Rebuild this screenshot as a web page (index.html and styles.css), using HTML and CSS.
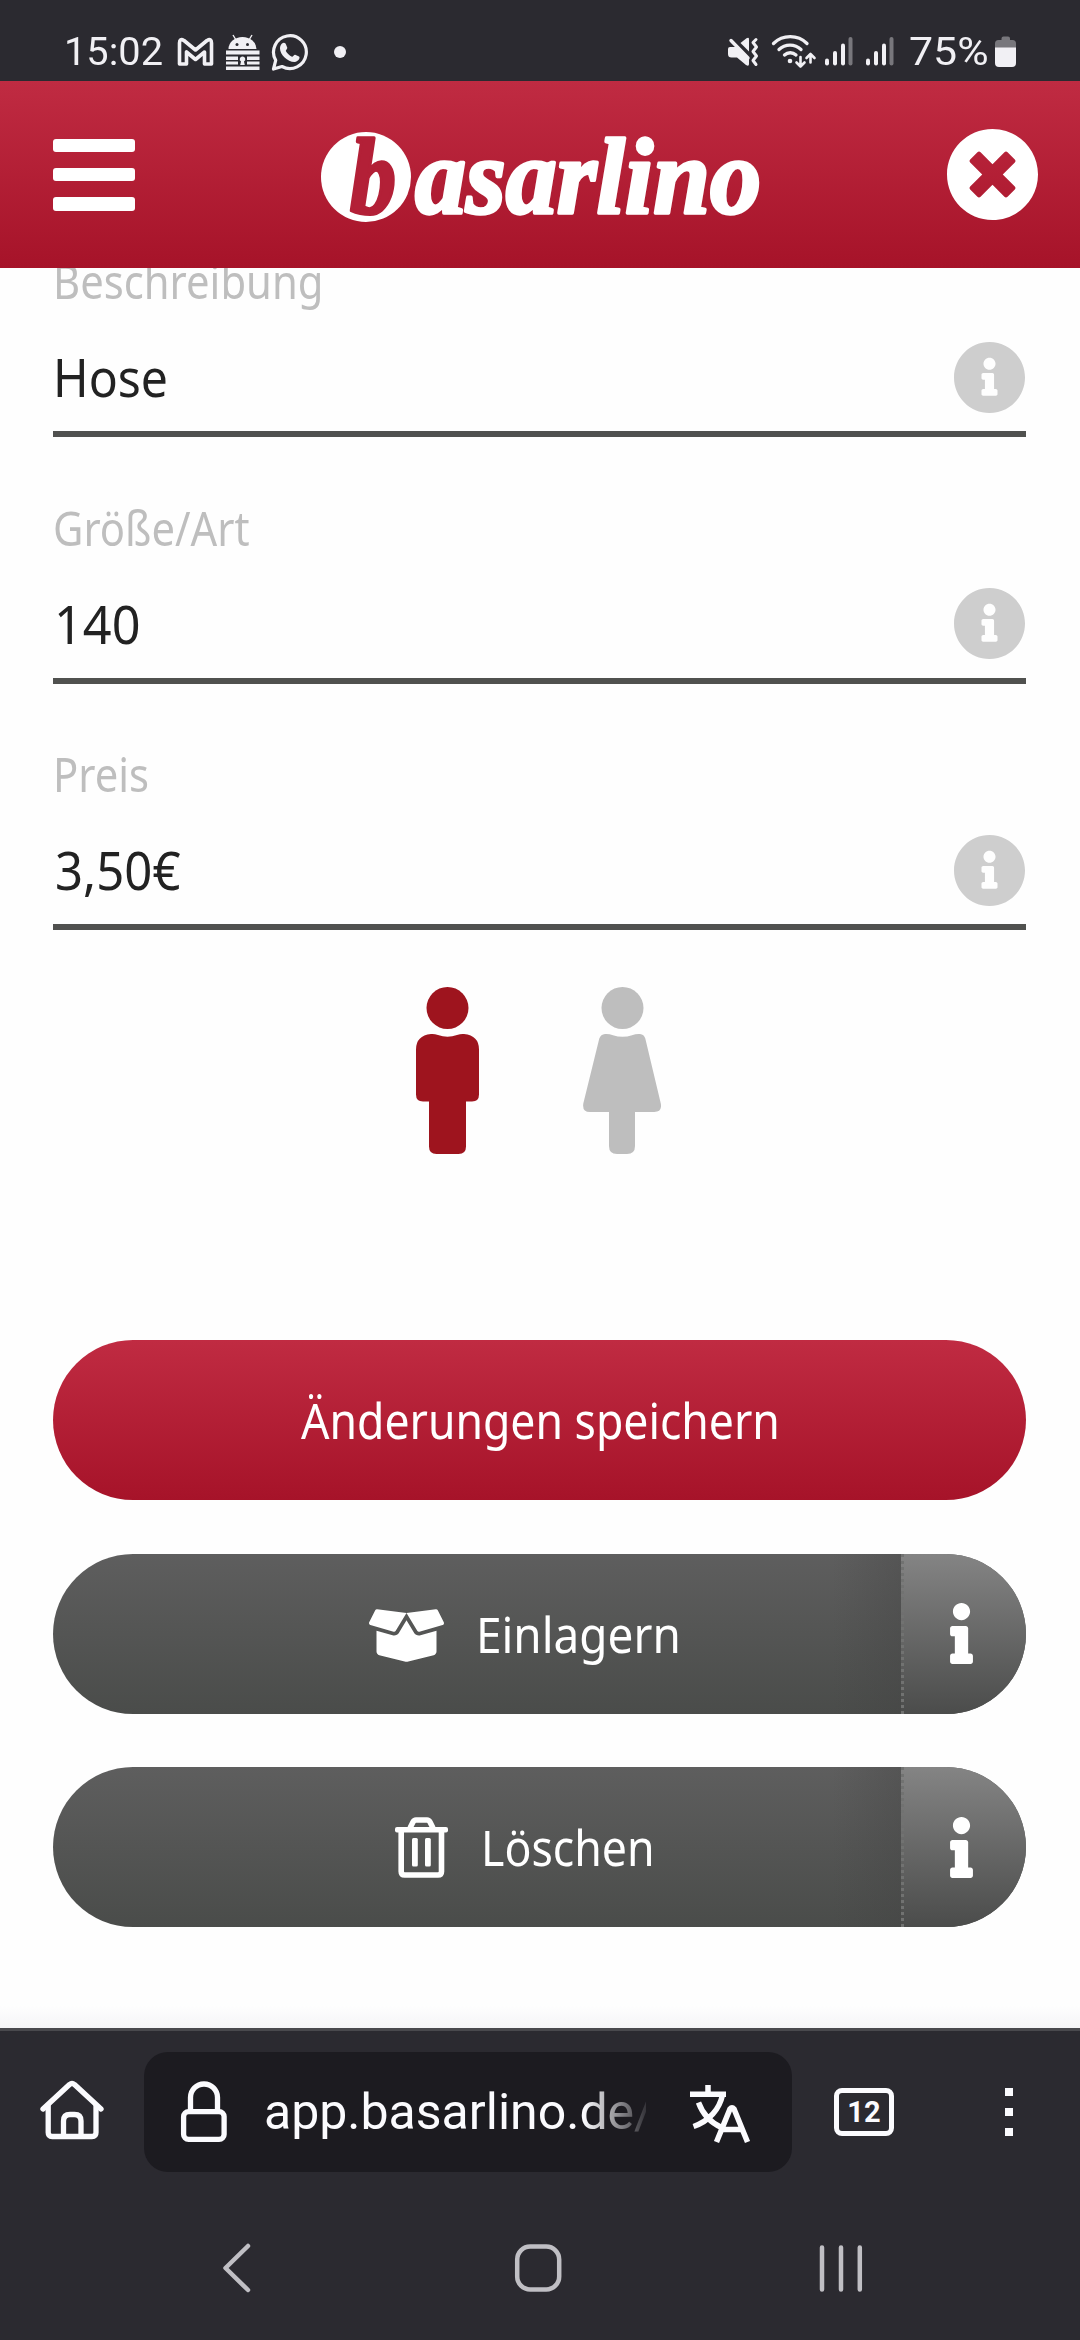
FILE: index.html
```html
<!DOCTYPE html>
<html lang="de">
<head>
<meta charset="utf-8">
<title>basarlino</title>
<link rel="stylesheet" href="styles.css">
</head>
<body>
<svg class="defs" aria-hidden="true">
  <symbol id="info" viewBox="0 0 192 512"><path d="M20 424.229h20V279.771H20c-11.046 0-20-8.954-20-20V212c0-11.046 8.954-20 20-20h112c11.046 0 20 8.954 20 20v212.229h20c11.046 0 20 8.954 20 20V492c0 11.046-8.954 20-20 20H20c-11.046 0-20-8.954-20-20v-47.771c0-11.046 8.954-20 20-20zM96 0C56.235 0 24 32.235 24 72s32.235 72 72 72 72-32.235 72-72S135.764 0 96 0z"/></symbol>
  <symbol id="info-circle" viewBox="8 8 496 496"><path d="M256 8C119.043 8 8 119.083 8 256c0 136.997 111.043 248 248 248s248-111.003 248-248C504 119.083 392.957 8 256 8zm0 110c23.196 0 42 18.804 42 42s-18.804 42-42 42-42-18.804-42-42 18.804-42 42-42zm56 254c0 6.627-5.373 12-12 12h-88c-6.627 0-12-5.373-12-12v-24c0-6.627 5.373-12 12-12h12v-64h-12c-6.627 0-12-5.373-12-12v-24c0-6.627 5.373-12 12-12h64c6.627 0 12 5.373 12 12v100h12c6.627 0 12 5.373 12 12v24z"/></symbol>
  <symbol id="signal" viewBox="0 0 34 40"><g stroke="#f1f0f4" stroke-width="4" stroke-linecap="round"><path d="M4 28.500V31.500"/><path d="M12 21V31.500"/><path d="M20 13.500V31.500"/><path d="M27.500 7V31.500" stroke="#78777c"/></g></symbol>
</svg>

<div class="status">
  <span class="clock">15:02</span>
  <svg width="50" height="40" viewBox="170 32 50 40"><path d="M179.500 64V43q0-5 4.500-2.500L195.500 50 207 40.500q4.500-2.500 4.500 2.500V64H204.500V52L195.500 59.500 186.500 52V64Z" fill="none" stroke="#f1f0f4" stroke-width="3.600" stroke-linejoin="round"/></svg>
  <svg width="45" height="40" viewBox="220 32 45 40"><g fill="#f1f0f4"><path d="M228.500 49a14 12 0 0 1 28 0z"/><rect x="226" y="50.500" width="33.500" height="4"/><rect x="226" y="56.500" width="33.500" height="3.500"/><rect x="226" y="61.500" width="33.500" height="3"/><rect x="226" y="66.500" width="33.500" height="3.500"/></g><path d="M233 35l3 5M252 35l-3 5" stroke="#f1f0f4" stroke-width="1.400"/><g fill="#2b2a30"><circle cx="237" cy="44.500" r="1.500"/><circle cx="247.500" cy="44.500" r="1.500"/><path d="M238 56h9v9.500h-9z"/></g><path fill="#f1f0f4" d="M242.500 56.500a2.700 2.700 0 0 1 1.500 5l.8 3.500h-4.600l.8-3.500a2.700 2.700 0 0 1 1.500-5z"/></svg>
  <svg width="47" height="40" viewBox="265 32 47 40"><path d="M273.500 69l2.200-8.700a16.400 16.400 0 1 1 6.300 6.200z" fill="none" stroke="#f1f0f4" stroke-width="3.200" stroke-linejoin="round"/><path fill="#f1f0f4" d="M282 43.500c2-1.500 3.500-.5 4 1l1.300 3.300c.3 1-1.800 2.700-1.500 3.200 1.400 2.600 3.600 4.500 6.200 5.700.8.300 2.200-2.400 3.200-2l3.800 1.900c1.500.8-.3 5.200-4.500 5.400-7 0-14.500-7.500-14.500-13.500 0-2 .7-4 2-5z"/></svg>
  <svg width="38" height="40" viewBox="312 32 38 40"><circle cx="340" cy="52" r="6" fill="#f1f0f4"/></svg>
  <span class="spacer"></span>
  <svg width="42" height="40" viewBox="725 32 42 40"><g fill="#f1f0f4"><path d="M730 47h7l12 12v5q0 3-3 1L737 57.500h-5.500q-3.500 0-3.500-3.500v-5q0-2 2-2z"/><path d="M740.500 43l6-4.700q2.500-1.300 2.500 1V51.500z"/></g><path d="M731 40.500L748 58" stroke="#f1f0f4" stroke-width="3.400" stroke-linecap="round"/><path d="M756 39.500l-3 3 3.500 4.500-3.500 4.500 3.500 4.500-3.500 4.500 3 4" fill="none" stroke="#f1f0f4" stroke-width="3" stroke-linecap="round" stroke-linejoin="round"/></svg>
  <svg width="54" height="40" viewBox="767 32 54 40"><g fill="none" stroke="#f1f0f4" stroke-width="3.300" stroke-linecap="round"><path d="M773.500 43.500a24 24 0 0 1 33.500 0"/><path d="M779 49.500a16 16 0 0 1 22 0"/><path d="M784.500 55a8.500 8.500 0 0 1 11.500 0"/><path d="M800.500 57v9.500m-4-4l4 4 4-4M810.500 62.500V54m-4 4l4-4 4 4" stroke-width="2.600" stroke-linejoin="round"/></g><circle cx="790" cy="61" r="2.300" fill="#f1f0f4"/></svg>
  <svg class="sig" width="34" height="40"><use href="#signal"/></svg>
  <svg class="sig second" width="34" height="40"><use href="#signal"/></svg>
  <span class="percent">75%</span>
  <svg width="24" height="40" viewBox="993 32 24 40"><path d="M995 48v-4.500q0-3.500 3.500-3.500h3v-1.500q0-2 2-2h4.500q2 0 2 2V40h2.500q3.500 0 3.500 3.500V48z" fill="#78777c"/><path d="M995 47.500h21V63q0 4-4 4h-13q-4 0-4-4z" fill="#f1f0f4"/></svg>
</div>

<header class="header">
  <div class="menu"><i></i><i></i><i></i></div>
  <svg class="logo" width="446" height="130" viewBox="320 112 446 130">
    <circle cx="366" cy="177" r="45" fill="#fff"/>
    <text class="logo-b" x="350" y="212.500" textLength="46" lengthAdjust="spacingAndGlyphs">b</text>
    <text class="logo-text" x="415" y="212.500" textLength="346" lengthAdjust="spacingAndGlyphs">asarlino</text>
  </svg>
  <svg class="close" width="91" height="91" viewBox="8 8 496 496"><path fill="#fff" d="M256 8C119 8 8 119 8 256s111 248 248 248 248-111 248-248S393 8 256 8zm121.600 313.100c4.700 4.700 4.700 12.300 0 17L338 377.600c-4.700 4.700-12.300 4.700-17 0L256 312l-65.100 65.600c-4.700 4.700-12.300 4.700-17 0L134.400 338c-4.700-4.700-4.700-12.300 0-17l65.600-65-65.600-65.100c-4.700-4.700-4.700-12.300 0-17l39.600-39.600c4.700-4.700 12.300-4.700 17 0l65 65.700 65.100-65.600c4.700-4.700 12.300-4.700 17 0l39.600 39.600c4.700 4.700 4.700 12.300 0 17L312 256l65.600 65.100z"/></svg>
</header>

<main class="page">
  <div class="field">
    <label>Beschreibung</label>
    <div class="entry"><span class="value">Hose</span><svg width="71" height="71"><use href="#info-circle"/></svg></div>
  </div>
  <div class="field">
    <label>Größe/Art</label>
    <div class="entry"><span class="value number">140</span><svg width="71" height="71"><use href="#info-circle"/></svg></div>
  </div>
  <div class="field">
    <label>Preis</label>
    <div class="entry"><span class="value price">3,50€</span><svg width="71" height="71"><use href="#info-circle"/></svg></div>
  </div>

  <div class="kids">
    <svg width="63" height="167" viewBox="416 987 63 167" fill="#9e141e"><circle cx="447.500" cy="1008" r="21"/><path d="M431 1034q3-.4 7 1 9.500 3.300 19 0 4-1.400 7-1 15 1.500 15 15.500v45q0 7-7 7h-6v45q0 7.500-7.500 7.500h-22q-7.500 0-7.500-7.500v-45h-6q-7 0-7-7v-45q0-14 15-15.500z"/></svg>
    <svg width="78" height="167" viewBox="583 987 78 167" fill="#bebebe"><circle cx="622.500" cy="1008" r="21"/><path d="M605 1034q4-.3 8 1.200 9.500 3 19 0 4-1.500 8-1.200 4 .3 5.300 4.500l15.500 65q1.500 8.500-6.500 8.500H635v34q0 8-8 8h-10q-8 0-8-8v-34H590q-8 0-6.700-8.500l16-65q1.500-4.200 5.700-4.500z"/></svg>
  </div>

  <div class="actions">
    <button class="btn primary"><span class="save">Änderungen speichern</span></button>
    <button class="btn">
      <span class="main">
        <svg class="box" width="75" height="53" viewBox="0 30 640 452" fill="#fff"><path d="M425.700 256c-16.900 0-32.800-9-41.400-23.400L320 126l-64.200 106.600c-8.700 14.500-24.600 23.500-41.500 23.500-4.500 0-9-.6-13.300-1.900L64 215v178c0 14.700 10 27.500 24.200 31l216.200 54.100c10.200 2.500 20.900 2.500 31 0L551.800 424c14.200-3.600 24.200-16.400 24.200-31V215l-137 39.100c-4.300 1.300-8.800 1.900-13.300 1.900zm212.600-112.200L586.800 41c-3.100-6.200-9.800-9.800-16.700-8.900L320 64l91.700 152.100c3.800 6.300 11.400 9.300 18.500 7.300l197.900-56.500c9.900-2.900 14.700-13.900 10.200-23.100zM53.200 41L1.700 143.800c-4.600 9.200.3 20.200 10.100 23l197.900 56.500c7.100 2 14.700-1 18.500-7.300L320 64 69.800 32.100c-6.900-.8-13.500 2.700-16.600 8.900z"/></svg>
        <span class="store">Einlagern</span>
      </span>
      <span class="help"><svg width="23" height="61"><use href="#info"/></svg></span>
    </button>
    <button class="btn">
      <span class="main">
        <svg width="53" height="61" viewBox="0 0 53 61"><g fill="none" stroke="#fff" stroke-width="5.500" stroke-linejoin="round"><path d="M6.200 14V54.500q0 3.500 3.500 3.500H43q3.500 0 3.500-3.500V14" stroke-width="5.600"/><path d="M15 11l3-6q1-2 3-2h11q2 0 3 2l3 6"/></g><g fill="#fff"><rect x="0" y="10" width="53" height="5.500" rx="2"/><rect x="17" y="21" width="5.800" height="28.500" rx="1.500"/><rect x="30" y="21" width="5.800" height="28.500" rx="1.500"/></g></svg>
        <span class="delete">Löschen</span>
      </span>
      <span class="help"><svg width="23" height="61"><use href="#info"/></svg></span>
    </button>
  </div>
</main>

<div class="toolbar">
  <svg width="66" height="64" viewBox="39 2080 66 64" fill="none" stroke="#fbfbfe" stroke-width="5.300" stroke-linecap="round" stroke-linejoin="round"><path d="M43 2109L69.500 2084.500q2.500-2 5 0L101 2109"/><path d="M48.200 2106v26.500q0 4 4 4H92q4 0 4-4V2106"/><path d="M63.500 2135v-14q0-6.500 6.500-6.500h4.500q6.500 0 6.500 6.500v14"/></svg>
  <div class="address">
    <svg width="50" height="64" viewBox="179 2080 50 64" fill="none" stroke="#fbfbfe" stroke-width="5.300"><rect x="183.600" y="2111.600" width="40.500" height="27.800" rx="5"/><path d="M190.500 2111v-13.500a13.500 13.500 0 0 1 27 0v13.500"/></svg>
    <span class="url">app.basarlino.de/</span>
    <svg width="64" height="64" viewBox="688 2080 64 64" fill="none" stroke="#fbfbfe" stroke-width="5.500"><path d="M690 2094.300h36M708 2085v9M722.500 2095c-3 14-13 26-29 31.500M698.500 2102.500c4 11 12 20 23 25"/><path d="M716.500 2142l13.500-33q2-2.500 4 0l13.500 33M721 2129.500h22"/></svg>
  </div>
  <div class="tabs">12</div>
  <div class="more"><i></i><i></i><i></i></div>
</div>
<nav class="nav">
  <svg width="30" height="52" viewBox="221 2242 30 52"><path d="M248 2246l-22.500 22 22.500 22" /></svg>
  <svg class="home" width="48" height="52" viewBox="514 2242 48 52"><rect x="517.200" y="2246.500" width="42" height="43" rx="13"/></svg>
  <svg width="48" height="52" viewBox="818 2242 48 52"><path d="M822 2247.500v42M841 2247.500v42M859.800 2247.500v42"/></svg>
</nav>
</body>
</html>
```
FILE: styles.css
```css
* { box-sizing: border-box; }

body {
  margin: 0;
  width: 1080px;
  height: 2340px;
  display: flex;
  flex-direction: column;
  overflow: hidden;
  background: #2b2a30;
  font-family: "Noto Sans", sans-serif;
}

svg { display: block; flex: none; }
.defs { position: absolute; width: 0; height: 0; }

/* system status bar */
.status {
  flex: none;
  height: 81px;
  padding: 32px 63px 0 64px;
  display: flex;
  color: #f1f0f4;
  font-family: Roboto, sans-serif;
  font-size: 39px;
  line-height: 40px;
}
.clock { width: 106px; transform: scaleX(1.02); transform-origin: 0 50%; }
.spacer { flex: 1; }
.sig { margin-left: 2px; }
.second { margin-left: 7px; }
.percent {
  width: 84px;
  margin-left: 11px;
  transform: scaleX(1.1);
  transform-origin: 0 50%;
}

/* app header */
.header {
  flex: none;
  height: 187px;
  padding: 0 42px 0 53px;
  display: flex;
  align-items: center;
  background: linear-gradient(#c02b42, #a61329);
}
.menu {
  width: 82px;
  height: 72px;
  display: flex;
  flex-direction: column;
  justify-content: space-between;
}
.menu i { height: 13.5px; border-radius: 3px; background: #fff; }
.logo { margin: 5px auto 0 185px; overflow: visible; }
.logo-b, .logo-text {
  font-family: "Liberation Serif", serif;
  font-size: 109px;
  font-weight: bold;
  font-style: italic;
  stroke-width: 3.5;
  stroke-linejoin: round;
}
.logo-b { fill: #b32037; stroke: #b32037; }
.logo-text { fill: #fff; stroke: #fff; }

/* form */
.page {
  flex: none;
  height: 1760px;
  padding: 0 54px 0 53px;
  overflow: hidden;
  background: linear-gradient(#fefefe, #fefefe 1738px, #f5f5f7);
}
.field { height: 186px; margin-bottom: 60.5px; }
.field:first-child { margin-top: -17px; }
.field label {
  display: block;
  height: 60px;
  width: max-content;
  font-size: 47px;
  line-height: 60px;
  color: #bebebe;
  transform: scaleX(.889);
  transform-origin: 0 50%;
}
.entry {
  height: 114px;
  margin-top: 12px;
  padding-right: 1px;
  border-bottom: 6px solid #50514f;
  display: flex;
  align-items: center;
  justify-content: space-between;
  fill: #cecece;
}
.value {
  font-size: 52.5px;
  line-height: 60px;
  color: #222;
  transform: scaleX(.917);
  transform-origin: 0 50%;
}
.number { margin-left: 1px; transform: scaleX(.96); }
.price { margin-left: 2px; transform: scaleX(.935); }

.kids {
  height: 223px;
  margin-top: -3.5px;
  padding-left: 363px;
  display: flex;
  gap: 104px;
}

/* buttons */
.actions { display: grid; gap: 53.5px; margin-top: 130px; }
.btn {
  height: 160px;
  padding: 0;
  border: 0;
  border-radius: 80px;
  overflow: hidden;
  display: flex;
  align-items: center;
  justify-content: center;
  color: #fff;
  font: 49px/60px "Noto Sans", sans-serif;
  background: linear-gradient(#5e5e5e, #4a4c4a);
}
.primary { background: linear-gradient(#c02b42, #a61329); }
.save, .store, .delete {
  white-space: nowrap;
  text-align: left;
  transform-origin: 0 50%;
}
.save { width: 477px; transform: scaleX(.909); }
.store { width: 202px; margin-left: 32px; transform: scaleX(.937); }
.delete { width: 171px; margin-left: 33px; transform: scaleX(.911); }
.box { margin-top: 4px; }
.main {
  flex: 1;
  height: 160px;
  padding-left: 93px;
  display: flex;
  align-items: center;
  justify-content: center;
  background: linear-gradient(90deg, transparent 780px, rgba(64, 64, 64, .3));
}
.help {
  width: 125px;
  height: 160px;
  padding-right: 7px;
  border-left: 3px dotted #717271;
  display: flex;
  align-items: center;
  justify-content: center;
  fill: #fff;
  background: linear-gradient(#848484, #4b4c4b);
}

/* browser toolbar */
.toolbar {
  flex: none;
  height: 168px;
  padding: 0 67px 3px 39px;
  border-top: 3px solid #49494d;
  display: flex;
  align-items: center;
}
.address {
  width: 648px;
  height: 120px;
  margin: 0 42px 0 39px;
  padding: 0 40px 0 35px;
  border-radius: 24px;
  display: flex;
  align-items: center;
  background: #1c1b20;
}
.url {
  width: 382px;
  margin: 0 auto 0 35px;
  overflow: hidden;
  color: #fbfbfe;
  font: 50px/64px Roboto, sans-serif;
  mask-image: linear-gradient(90deg, #000 320px, transparent 390px);
}
.tabs {
  width: 60px;
  height: 48px;
  border: 5px solid #fbfbfe;
  border-radius: 8px;
  color: #fbfbfe;
  font: bold 29px/38px Roboto, sans-serif;
  text-align: center;
}
.more { margin-left: auto; display: grid; gap: 12px; }
.more i { width: 8px; height: 8px; background: #fbfbfe; }

/* system navigation */
.nav {
  height: 144px;
  padding: 46px 214px 0 221px;
  display: flex;
  fill: none;
  stroke: #c0bfc4;
  stroke-width: 4.5;
  stroke-linecap: round;
  stroke-linejoin: round;
}
.home { margin: 0 auto 0 263px; }
```
